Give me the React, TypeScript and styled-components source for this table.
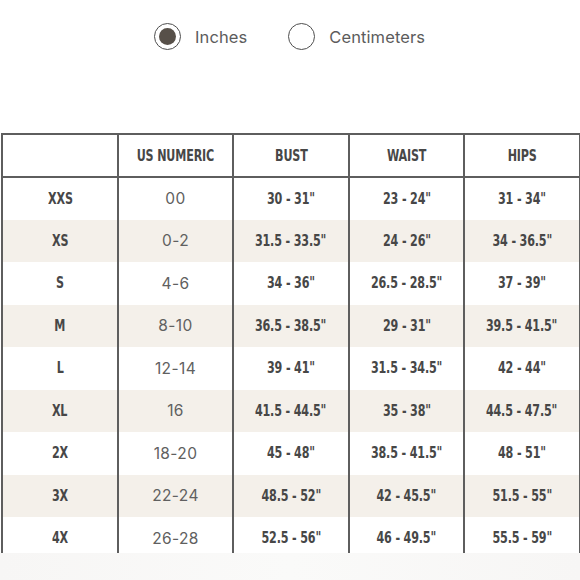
import React from "react";
import styled, { createGlobalStyle } from "styled-components";

const Global = createGlobalStyle`
  html, body { margin: 0; padding: 0; background: #ffffff; }
  body { width: 580px; height: 580px; overflow: hidden; }
`;

const Page = styled.div`
  width: 580px;
  height: 580px;
  display: flex;
  flex-direction: column;
  background: #fff;
`;

const Toggle = styled.div`
  display: flex;
  align-items: center;
  padding: 22px 0 0 154px;
  height: 29px;
`;

const Option = styled.label`
  display: flex;
  align-items: center;
  gap: 14px;
  margin-right: 41px;
  font-family: Inter, "Noto Sans", sans-serif;
  font-size: 16.5px;
  color: #5c5c5c;
  letter-spacing: 0.1px;
`;

const Radio = styled.span<{ $on?: boolean }>`
  width: 25px;
  height: 25px;
  border-radius: 50%;
  border: 1.8px solid #4e4e4e;
  display: flex;
  align-items: center;
  justify-content: center;
  box-sizing: content-box;
  &::after {
    content: "";
    display: ${(p) => (p.$on ? "block" : "none")};
    width: 17px;
    height: 17px;
    border-radius: 50%;
    background: #575049;
  }
`;

const TableClip = styled.div`
  margin-top: 82px;
  height: 420px;
  overflow: hidden;
`;

const Table = styled.table`
  border-collapse: collapse;
  width: 578px;
  margin-left: 1px;
  table-layout: fixed;
`;

const Condensed = styled.span`
  display: inline-block;
  transform: scaleX(0.8);
  white-space: nowrap;
`;

const Th = styled.th`
  border: 2px solid #5e5e5e;
  height: 41px;
  padding: 0;
  font-family: "DejaVu Sans Condensed", "Liberation Sans Narrow", sans-serif;
  font-weight: 700;
  font-size: 15.5px;
  color: #474747;
  letter-spacing: -0.2px;
  text-align: center;
  background: #fff;
`;

const Tr = styled.tr<{ $shade?: boolean }>`
  height: 42.5px;
  background: ${(p) => (p.$shade ? "#f4f0ea" : "#ffffff")};
`;

const Td = styled.td<{ $plain?: boolean }>`
  border-left: 2px solid #5e5e5e;
  border-right: 2px solid #5e5e5e;
  padding: 0;
  text-align: center;
  font-family: ${(p) =>
    p.$plain
      ? 'Inter, "Noto Sans", sans-serif'
      : '"DejaVu Sans Condensed", "Liberation Sans Narrow", sans-serif'};
  font-weight: ${(p) => (p.$plain ? 400 : 700)};
  font-size: 15.5px;
  color: ${(p) => (p.$plain ? "#606060" : "#474747")};
  letter-spacing: ${(p) => (p.$plain ? "0.4px" : "-0.2px")};
`;

const Foot = styled.div`
  flex: 1;
  background: linear-gradient(90deg, #f7f6f5, #fafaf9 50%, #f7f6f5);
`;

const rows: [string, string, string, string, string][] = [
  ["XXS", "00", '30 - 31"', '23 - 24"', '31 - 34"'],
  ["XS", "0-2", '31.5 - 33.5"', '24 - 26"', '34 - 36.5"'],
  ["S", "4-6", '34 - 36"', '26.5 - 28.5"', '37 - 39"'],
  ["M", "8-10", '36.5 - 38.5"', '29 - 31"', '39.5 - 41.5"'],
  ["L", "12-14", '39 - 41"', '31.5 - 34.5"', '42 - 44"'],
  ["XL", "16", '41.5 - 44.5"', '35 - 38"', '44.5 - 47.5"'],
  ["2X", "18-20", '45 - 48"', '38.5 - 41.5"', '48 - 51"'],
  ["3X", "22-24", '48.5 - 52"', '42 - 45.5"', '51.5 - 55"'],
  ["4X", "26-28", '52.5 - 56"', '46 - 49.5"', '55.5 - 59"'],
];

export default function App() {
  return (
    <>
      <Global />
      <Page>
        <Toggle>
          <Option>
            <Radio $on />
            Inches
          </Option>
          <Option>
            <Radio />
            Centimeters
          </Option>
        </Toggle>
        <TableClip>
          <Table>
            <colgroup>
              <col style={{ width: 116 }} />
              <col style={{ width: 115 }} />
              <col style={{ width: 116 }} />
              <col style={{ width: 115 }} />
              <col style={{ width: 116 }} />
            </colgroup>
            <thead>
              <tr>
                <Th></Th>
                <Th><Condensed>US NUMERIC</Condensed></Th>
                <Th><Condensed>BUST</Condensed></Th>
                <Th><Condensed>WAIST</Condensed></Th>
                <Th><Condensed>HIPS</Condensed></Th>
              </tr>
            </thead>
            <tbody>
              {rows.map((r, i) => (
                <Tr key={r[0]} $shade={i % 2 === 1}>
                  <Td><Condensed>{r[0]}</Condensed></Td>
                  <Td $plain>{r[1]}</Td>
                  <Td><Condensed>{r[2]}</Condensed></Td>
                  <Td><Condensed>{r[3]}</Condensed></Td>
                  <Td><Condensed>{r[4]}</Condensed></Td>
                </Tr>
              ))}
            </tbody>
          </Table>
        </TableClip>
        <Foot />
      </Page>
    </>
  );
}
